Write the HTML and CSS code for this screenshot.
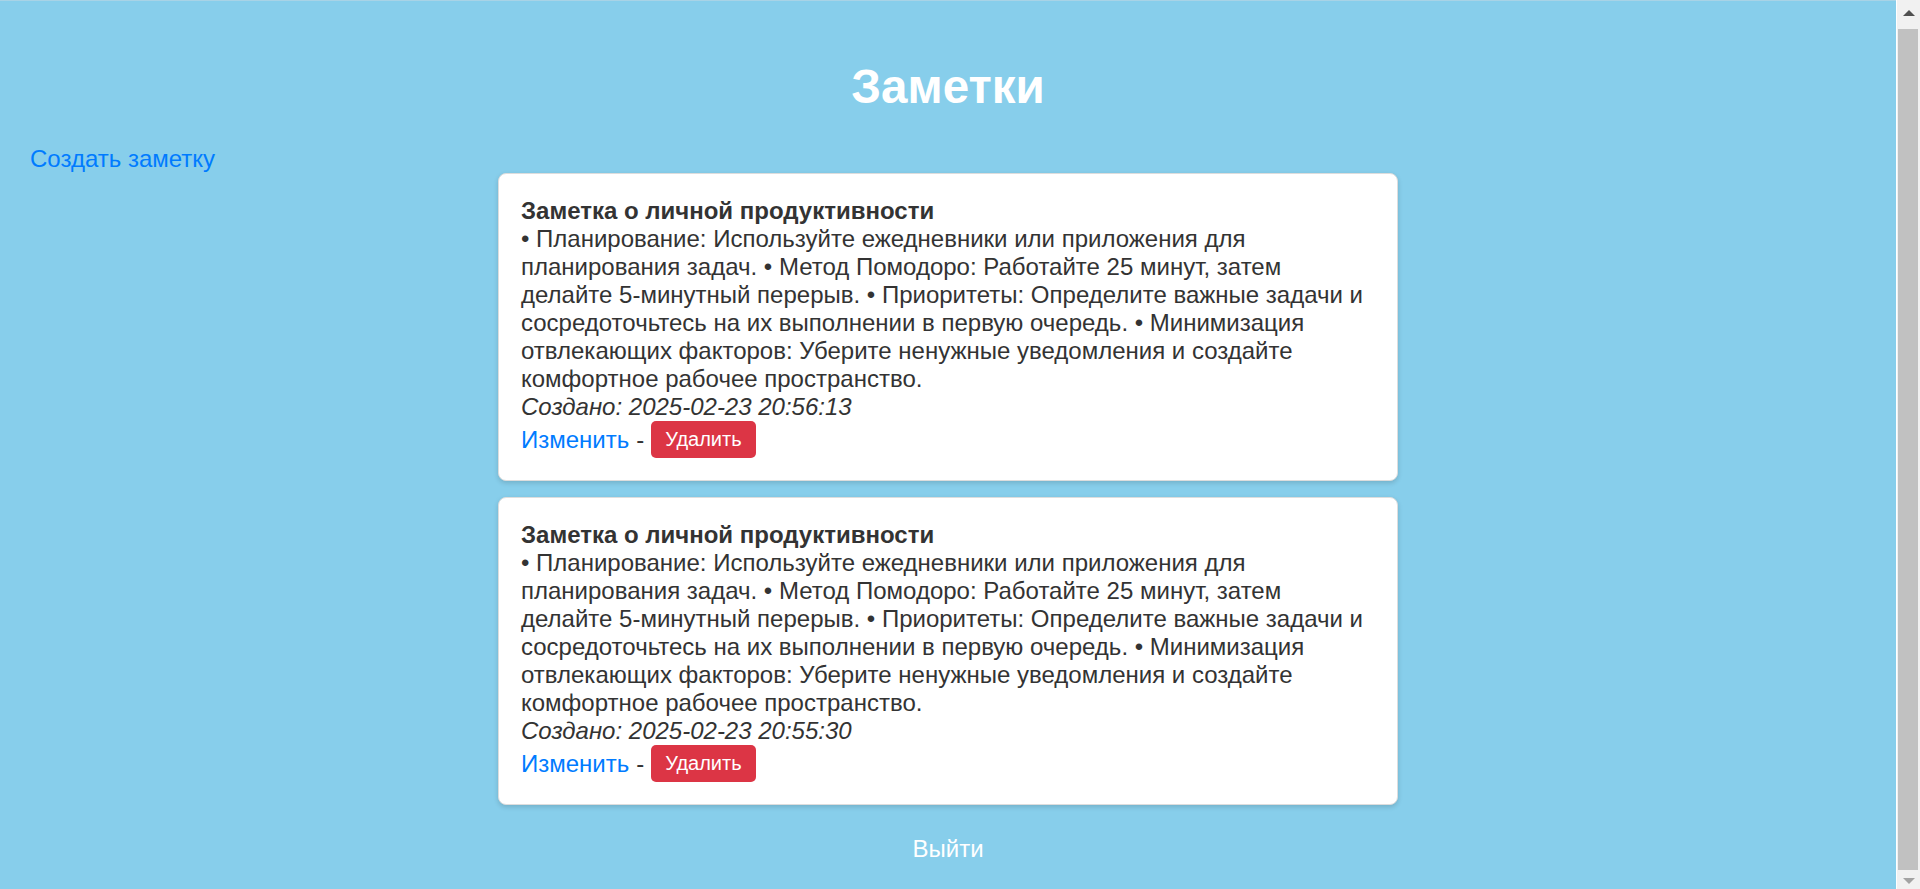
FILE: index.html
```html
<!DOCTYPE html>
<html lang="ru">
<head>
<meta charset="utf-8">
<title>Заметки</title>
<link rel="stylesheet" href="styles.css">
</head>
<body>
<div class="page">
  <h1 class="page-title">Заметки</h1>
  <div class="create-row"><a class="link" href="#">Создать заметку</a></div>
  <div class="notes">
    <div class="note">
      <div class="note-title">Заметка о личной продуктивности</div>
      <div class="note-text">• Планирование: Используйте ежедневники или приложения для планирования задач. • Метод Помодоро: Работайте 25 минут, затем делайте 5-минутный перерыв. • Приоритеты: Определите важные задачи и сосредоточьтесь на их выполнении в первую очередь. • Минимизация отвлекающих факторов: Уберите ненужные уведомления и создайте комфортное рабочее пространство.</div>
      <div class="note-date">Создано: 2025-02-23 20:56:13</div>
      <div class="note-actions"><a class="link" href="#">Изменить</a> - <button class="btn-delete" type="button">Удалить</button></div>
    </div>
    <div class="note">
      <div class="note-title">Заметка о личной продуктивности</div>
      <div class="note-text">• Планирование: Используйте ежедневники или приложения для планирования задач. • Метод Помодоро: Работайте 25 минут, затем делайте 5-минутный перерыв. • Приоритеты: Определите важные задачи и сосредоточьтесь на их выполнении в первую очередь. • Минимизация отвлекающих факторов: Уберите ненужные уведомления и создайте комфортное рабочее пространство.</div>
      <div class="note-date">Создано: 2025-02-23 20:55:30</div>
      <div class="note-actions"><a class="link" href="#">Изменить</a> - <button class="btn-delete" type="button">Удалить</button></div>
    </div>
  </div>
  <div class="logout-row"><a class="logout" href="#">Выйти</a></div>
</div>
<div class="scrollbar" aria-hidden="true">
  <div class="sb-arrow sb-up"></div>
  <div class="sb-track"><div class="sb-thumb"></div></div>
  <div class="sb-arrow sb-down"></div>
</div>
</body>
</html>
```
FILE: styles.css
```css
html, body {
  margin: 0;
  padding: 0;
}
body {
  display: flex;
  align-items: flex-start;
  background: #87ceeb;
  font-family: "Liberation Sans", Arial, sans-serif;
  font-size: 24px;
  line-height: 28px;
  color: #333333;
}
.page {
  flex: 1;
  min-width: 0;
  border-top: 1px solid #a8d3e6;
  padding: 0 30px 36px 30px;
}
.page-title {
  margin: 58px 0 31px;
  font-size: 47.5px;
  line-height: 55px;
  font-weight: bold;
  color: #ffffff;
  text-align: center;
}
.link {
  color: #007bff;
  text-decoration: none;
}
.notes {
  display: flex;
  flex-direction: column;
  align-items: center;
  gap: 16px;
}
.note {
  box-sizing: border-box;
  width: 900px;
  background: #ffffff;
  border: 1px solid #dddddd;
  border-radius: 8px;
  padding: 23px 20px 22px 22px;
  box-shadow: 0 2px 5px rgba(0, 0, 0, 0.15);
}
.note-title {
  font-weight: bold;
}
.note-date {
  font-style: italic;
}
.note-actions {
  display: flex;
  align-items: center;
  gap: 7px;
}
.btn-delete {
  font-family: "Liberation Sans", Arial, sans-serif;
  font-size: 20px;
  line-height: 23px;
  padding: 7px 14px;
  border: none;
  border-radius: 5px;
  background: #dc3545;
  color: #ffffff;
}
.logout-row {
  margin-top: 30px;
  text-align: center;
}
.logout {
  color: #ffffff;
  text-decoration: none;
}
.scrollbar {
  position: sticky;
  top: 0;
  flex: 0 0 24px;
  height: 100vh;
  box-sizing: border-box;
  border-left: 1px solid #ffffff;
  background: #f1f1f1;
  display: flex;
  flex-direction: column;
  align-items: center;
}
.sb-arrow {
  flex: 0 0 auto;
  width: 0;
  height: 0;
  border-left: 6px solid transparent;
  border-right: 6px solid transparent;
}
.sb-up {
  margin: 10px 0 0;
  border-bottom: 6px solid #505050;
}
.sb-down {
  margin: 0 0 5px;
  border-top: 6px solid #a3a3a3;
}
.sb-track {
  flex: 1;
  align-self: stretch;
  padding: 13px 2px 8px 1px;
  display: flex;
}
.sb-thumb {
  flex: 1;
  background: #c1c1c1;
}
```
